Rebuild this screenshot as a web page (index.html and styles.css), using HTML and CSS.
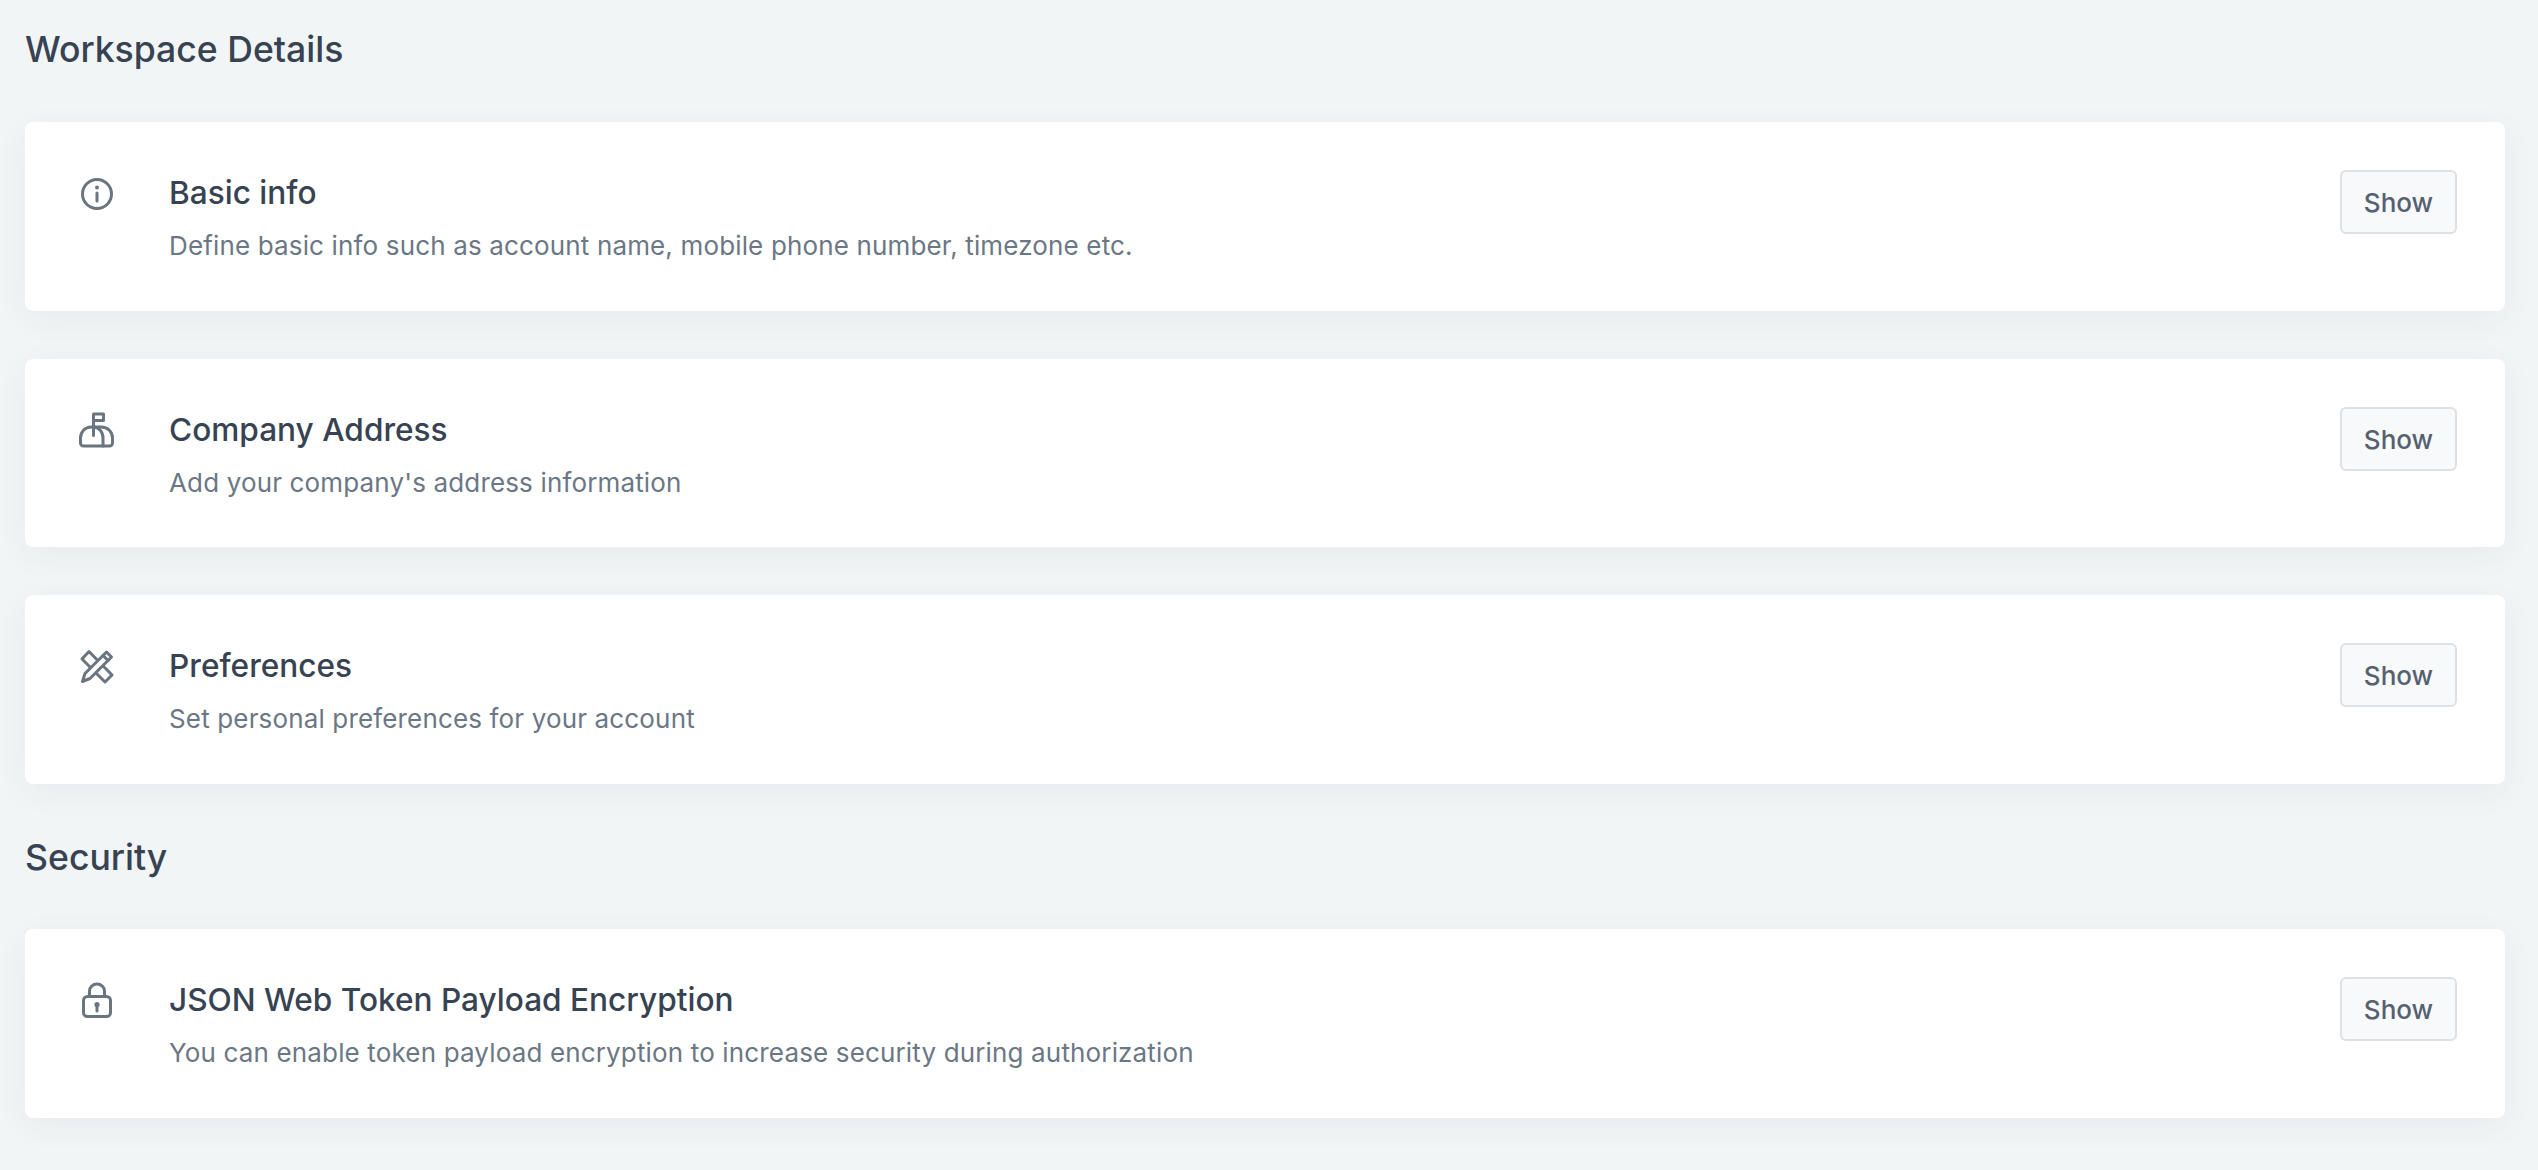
FILE: index.html
```html
<!DOCTYPE html>
<html lang="en">
<head>
<meta charset="utf-8">
<title>Workspace Details</title>
<link rel="stylesheet" href="styles.css">
</head>
<body>
<main class="page">
  <h2 class="section-title first">Workspace Details</h2>
  <section class="card">
    <svg class="icon" viewBox="-4 -4 40 40"><circle cx="16" cy="16" r="14.500"/><path d="M16 15v8"/><circle class="dot" cx="16" cy="9.500" r="2"/></svg>
    <div class="text">
      <h3 class="card-title">Basic info</h3>
      <p class="card-desc">Define basic info such as account name, mobile phone number, timezone etc.</p>
    </div>
    <button class="btn">Show</button>
  </section>
  <section class="card">
    <svg class="icon" viewBox="-4 -4 40 40"><path d="M12.500 20.500V-1H22.500V5.500H12.500"/><path d="M10 12h10c7 0 11.500 5 11.500 11v5a3 3 0 0 1-3 3H2.500a3 3 0 0 1-3-3v-5C-.5 17 4 12 10 12z"/><path d="M12 12c6 0 10 5 10 11v8"/></svg>
    <div class="text">
      <h3 class="card-title">Company Address</h3>
      <p class="card-desc">Add your company's address information</p>
    </div>
    <button class="btn">Show</button>
  </section>
  <section class="card">
    <svg class="icon" viewBox="-4 -4 40 40"><path d="M8 .5 1 8 24 31l7-7z"/><path class="over" d="M25.500 1 30.500 6 9 27.500 1.500 30.500l2.500-8z"/><path d="M22 4.500 27 9.500"/></svg>
    <div class="text">
      <h3 class="card-title">Preferences</h3>
      <p class="card-desc">Set personal preferences for your account</p>
    </div>
    <button class="btn">Show</button>
  </section>
  <h2 class="section-title">Security</h2>
  <section class="card">
    <svg class="icon" viewBox="-4 -4 40 40"><path d="M8.500 10.500V6a7.500 7 0 0 1 15 0v4.500"/><rect x="2.500" y="11.500" width="27" height="20" rx="4"/><path d="M16 20v6"/><circle class="dot" cx="16" cy="19.500" r="2.600"/></svg>
    <div class="text">
      <h3 class="card-title">JSON Web Token Payload Encryption</h3>
      <p class="card-desc">You can enable token payload encryption to increase security during authorization</p>
    </div>
    <button class="btn">Show</button>
  </section>
</main>
</body>
</html>
```
FILE: styles.css
```css
* { box-sizing: border-box; }
html, body { margin: 0; height: 100%; }
body {
  background: #f1f5f6;
  font-family: Inter, "Noto Sans", sans-serif;
  color: #374353;
  overflow: hidden;
}
.page {
  padding: 0 33px 0 25px;
  display: flex;
  flex-direction: column;
}
.section-title {
  margin: 0;
  font-size: 35.600px;
  line-height: 48px;
  font-weight: 500;
  color: #374353;
  height: 97.200px;
  padding-top: 2px;
}
.section-title.first {
  height: 122px;
  padding-top: 26px;
}
.card {
  height: 188.600px;
  background: #fff;
  border-radius: 8px;
  box-shadow: 0 8px 32px rgba(56, 67, 80, 0.05);
  margin-bottom: 48px;
  padding: 48px 48px 0 52px;
  display: flex;
  align-items: flex-start;
}
.icon {
  width: 40px;
  height: 40px;
  flex: none;
  margin-top: 4px;
  fill: none;
  stroke: #6a7580;
  stroke-width: 3;
  stroke-linejoin: round;
  stroke-linecap: round;
}
.icon .dot { fill: #6a7580; stroke: none; }
.icon .over { fill: #fff; }
.text { flex: 1; margin-left: 52px; }
.card-title {
  margin: 0;
  font-size: 31.600px;
  line-height: 44px;
  font-weight: 500;
  color: #374353;
  margin-top: 1px;
}
.card-desc {
  margin: 11px 0 0;
  font-size: 26px;
  line-height: 40px;
  font-weight: 400;
  letter-spacing: 0.15px;
  color: #6b7785;
}
.btn {
  width: 117px;
  height: 64px;
  flex: none;
  background: #f8f9fb;
  border: 2px solid #dde1e5;
  border-radius: 6px;
  font: 500 26px/1 Inter, "Noto Sans", sans-serif;
  color: #566170;
  padding: 2px 0 0;
}
```
